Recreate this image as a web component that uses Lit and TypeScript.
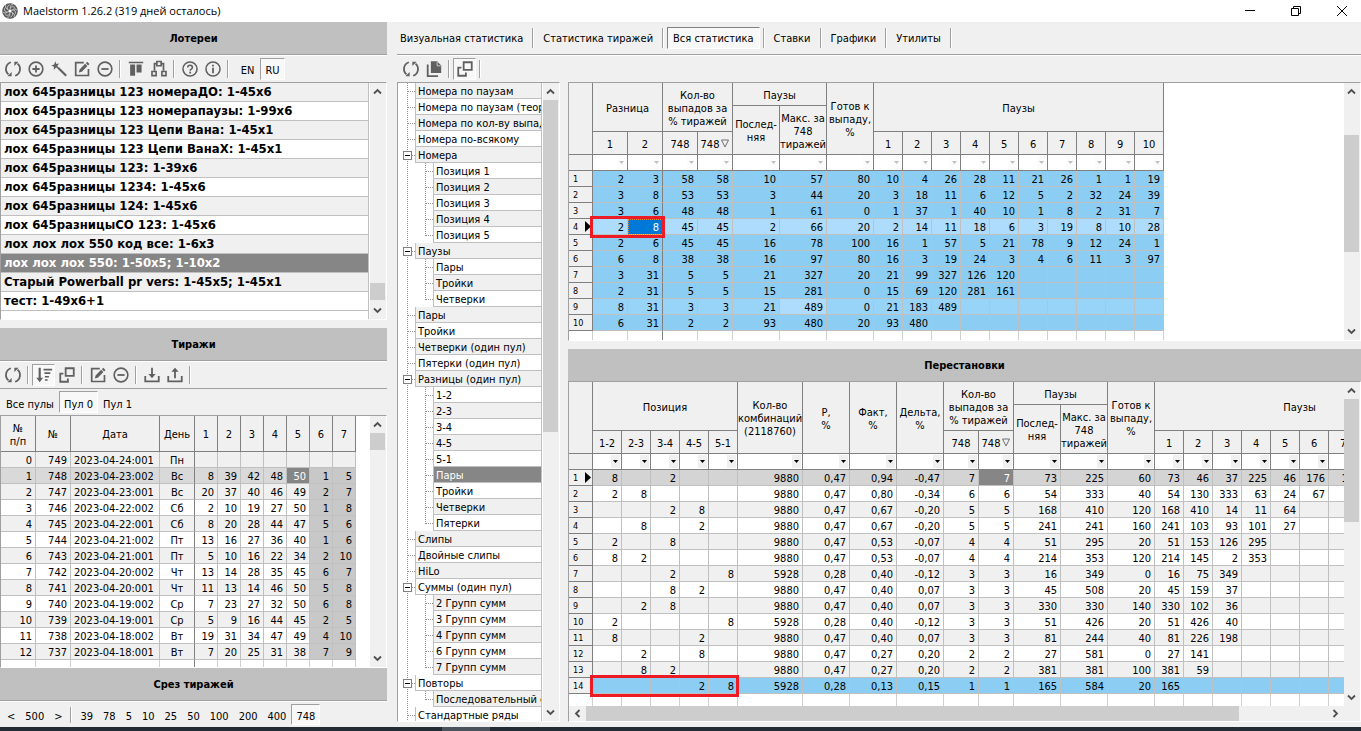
import { LitElement, html, css, svg, nothing } from "lit";
import { customElement, property } from "lit/decorators.js";
import { classMap } from "lit/directives/class-map.js";

/* ---------- icons ---------- */
const icons: Record<string, any> = {
  refresh: svg`<path d="M7.600 2.500A7.900 7.900 0 0 0 5 16M12.400 17.500A7.900 7.900 0 0 0 15 4" fill="none" stroke="currentColor" stroke-width="2"/><path d="M3.800 18h4.700v-4.800zM16.200 2h-4.700v4.800z"/>`,
  plus: svg`<circle cx="10" cy="10" r="7.6" fill="none" stroke="currentColor" stroke-width="1.8"/><path d="M9 6h2v3h3v2h-3v3H9v-3H6V9h3z"/>`,
  minus: svg`<circle cx="10" cy="10" r="7.6" fill="none" stroke="currentColor" stroke-width="1.8"/><path d="M6 9h8v2H6z"/>`,
  wand: svg`<path d="M9 8.5l9 9" stroke="currentColor" stroke-width="2.4"/><path d="M6 1.5l1 3 3.2-.6-2 2.6 1.6 3-3.2-1.1L4.200 11l.2-3.400L1.400 6l3.200-1z"/>`,
  edit: svg`<path d="M12 3H3v14.200h14.200V10" fill="none" stroke="currentColor" stroke-width="1.900"/><path d="M6.500 13.800l.8-3.300 6.200-6.200 2.500 2.500-6.200 6.200zM14.300 3.500l1.500-1.500 2.500 2.500-1.500 1.500z"/>`,
  columns: svg`<path d="M2 2h16v1.600H2zM3.500 5H9v12.500H3.500zM10.600 5h5.600v9h-5.600z"/>`,
  nodes: svg`<path d="M8 4H5v8M12 4h3v8" fill="none" stroke="currentColor" stroke-width="1.900"/><path d="M7.600 1.600h4.800v4.800H7.600zM2.200 12.800h4.600v4.600H2.200zM13.200 12.800h4.600v4.600h-4.600z" fill="none" stroke="currentColor" stroke-width="1.800"/>`,
  help: svg`<circle cx="10" cy="10" r="7.800" fill="none" stroke="currentColor" stroke-width="1.700"/><path d="M7.500 8.200c0-3.400 5.200-3.200 5.200 0 0 1.900-2.500 1.900-2.500 3.700" fill="none" stroke="currentColor" stroke-width="1.700"/><path d="M9.200 13h2v2h-2z"/>`,
  info: svg`<circle cx="10" cy="10" r="7.800" fill="none" stroke="currentColor" stroke-width="1.700"/><path d="M9 5.200h2v2H9zM9 8.600h2v6H9z"/>`,
  sort: svg`<path d="M4 2h2.400v11H9l-3.800 5L1.400 13H4zM9.500 3H19v2H9.500zM10.500 7H17v2h-6.500zM11 11h4.500v1.800H11zM11 14.600h3v1.800h-3z"/>`,
  layers: svg`<path d="M8.500 2.500h9v8.500h-9z" fill="none" stroke="currentColor" stroke-width="2"/><path d="M6 8.500H2.500v9H11V14" fill="none" stroke="currentColor" stroke-width="2"/>`,
  download: svg`<path d="M2.500 11v6h15v-6" fill="none" stroke="currentColor" stroke-width="2"/><path d="M9 2h2v7h3l-4 4.500L6 9h3z"/>`,
  upload: svg`<path d="M2.500 11v6h15v-6" fill="none" stroke="currentColor" stroke-width="2"/><path d="M9 13.500h2v-7h3L10 2 6 6.500h3z"/>`,
  copy: svg`<path d="M6.500 1.500h7l4.500 4.500v8.500H6.500z"/><path d="M3 5v13h11.500" fill="none" stroke="currentColor" stroke-width="2"/><path d="M13.500 2v4.500h4" fill="none" stroke="#f0f0f0" stroke-width=".8"/>`,
};
const icon = (name: string) =>
  html`<svg class="icon" viewBox="0 0 20 20" fill="currentColor" aria-hidden="true">${icons[name]}</svg>`;

/* ---------- scroll bar ---------- */
@customElement("scroll-strip")
class ScrollStrip extends LitElement {
  @property({ type: Boolean, reflect: true }) horizontal = false;
  @property({ type: Number }) before = 0;
  @property({ type: Number }) thumb = 0;
  @property({ type: Number }) after = 0;

  static styles = css`
    :host { display: flex; flex-direction: column; flex: none; width: 16px; background: #f0f0f0; border-right: 1px solid #f0f0f0; }
    :host([horizontal]) { flex-direction: row; width: auto; height: 15px; border-right: 16px solid #f0f0f0; }
    button { flex: none; height: 17px; width: 100%; padding: 0; border: 0; background: none; display: flex; align-items: center; justify-content: center; color: #505050; }
    :host([horizontal]) button { width: 17px; height: 100%; }
    svg { width: 9px; height: 9px; display: block; }
    .thumb { background: #cdcdcd; }
  `;
  arrow(d: string, label: string) {
    return html`<button aria-label=${label}><svg viewBox="0 0 9 9"><path d=${d} fill="none" stroke="currentColor" stroke-width="1.800"/></svg></button>`;
  }
  render() {
    const h = this.horizontal;
    return html`
      ${this.arrow(h ? "M6.500 1L3 4.500 6.500 8" : "M1 6.500L4.500 3 8 6.500", h ? "Влево" : "Вверх")}
      <div style="flex:${this.before} 1 0"></div>
      <div class="thumb" style="flex:${this.thumb} 1 0"></div>
      <div style="flex:${this.after} 1 0"></div>
      ${this.arrow(h ? "M2.500 1L6 4.500 2.500 8" : "M1 2.500L4.500 6 8 2.500", h ? "Вправо" : "Вниз")}`;
  }
}

/* ---------- data ---------- */
const lotteries = [
  "лох 645разницы 123 номераДО: 1-45x6",
  "лох 645разницы 123 номерапаузы: 1-99x6",
  "лох 645разницы 123 Цепи Вана: 1-45x1",
  "лох 645разницы 123 Цепи ВанаХ: 1-45x1",
  "лох 645разницы 123: 1-39x6",
  "лох 645разницы 1234: 1-45x6",
  "лох 645разницы 124: 1-45x6",
  "лох 645разницыСО 123: 1-45x6",
  "лох лох лох 550 код все: 1-6x3",
  "лох лох лох 550: 1-50x5; 1-10x2",
  "Старый Powerball pr vers: 1-45x5; 1-45x1",
  "тест: 1-49x6+1",
];
const draws = `0 749 2023-04-24:001 Пн
1 748 2023-04-23:002 Вс 8 39 42 48 50 1 5
2 747 2023-04-23:001 Вс 20 37 40 46 49 2 7
3 746 2023-04-22:002 Сб 2 10 19 27 50 1 8
4 745 2023-04-22:001 Сб 8 20 28 44 47 5 6
5 744 2023-04-21:002 Пт 13 16 27 36 40 1 6
6 743 2023-04-21:001 Пт 5 10 16 22 34 2 10
7 742 2023-04-20:002 Чт 13 14 28 35 45 6 7
8 741 2023-04-20:001 Чт 11 13 14 46 50 5 8
9 740 2023-04-19:002 Ср 7 23 27 32 50 6 8
10 739 2023-04-19:001 Ср 5 9 16 44 45 2 5
11 738 2023-04-18:002 Вт 19 31 34 47 49 4 10
12 737 2023-04-18:001 Вт 7 20 25 31 38 7 9`.split("\n").map((r) => r.split(" "));

/* "+" opens a branch, "-" is a child, "_" is the last child */
const tree = [
  "Номера по паузам", "Номера по паузам (теория)", "Номера по кол-ву выпадов", "Номера по-всякому",
  "+Номера", "-Позиция 1", "-Позиция 2", "-Позиция 3", "-Позиция 4", "_Позиция 5",
  "+Паузы", "-Пары", "-Тройки", "_Четверки",
  "Пары", "Тройки", "Четверки (один пул)", "Пятерки (один пул)",
  "+Разницы (один пул)", "-1-2", "-2-3", "-3-4", "-4-5", "-5-1", "-Пары", "-Тройки", "-Четверки", "_Пятерки",
  "Слипы", "Двойные слипы", "HiLo",
  "+Суммы (один пул)", "-2 Групп сумм", "-3 Групп сумм", "-4 Групп сумм", "-6 Групп сумм", "_7 Групп сумм",
  "+Повторы", "_Последовательный список", "Стандартные ряды",
];
const selectedNode = 24;

const diffs = `2 3 58 58 10 57 80 10 4 26 28 11 21 26 1 1 19
3 8 53 53 3 44 20 3 18 11 6 12 5 2 32 24 39
3 6 48 48 1 61 0 1 37 1 40 10 1 8 2 31 7
2 8 45 45 2 66 20 2 14 11 18 6 3 19 8 10 28
2 6 45 45 16 78 100 16 1 57 5 21 78 9 12 24 1
6 8 38 38 16 97 80 16 3 19 24 3 4 6 11 3 97
3 31 5 5 21 327 20 21 99 327 126 120
2 31 5 5 15 281 0 15 69 120 281 161
8 31 3 3 21 489 0 21 183 489
6 31 2 2 93 480 20 93 480`.split("\n").map((r) => r.split(" "));

const perms = `8 . 2 . . 9880 0,47 0,94 -0,47 7 7 73 225 60 73 46 37 225 46 176 12
2 8 . . . 9880 0,47 0,80 -0,34 6 6 54 333 40 54 130 333 63 24 67
. . 2 8 . 9880 0,47 0,67 -0,20 5 5 168 410 120 168 410 14 11 64
. 8 . 2 . 9880 0,47 0,67 -0,20 5 5 241 241 160 241 103 93 101 27
2 . 8 . . 9880 0,47 0,53 -0,07 4 4 51 295 20 51 153 126 295
8 2 . . . 9880 0,47 0,53 -0,07 4 4 214 353 120 214 145 2 353
. . 2 . 8 5928 0,28 0,40 -0,12 3 3 16 349 0 16 75 349
. . 8 2 . 9880 0,47 0,40 0,07 3 3 45 508 20 45 159 37
. 2 8 . . 9880 0,47 0,40 0,07 3 3 330 330 140 330 102 36
2 . . . 8 5928 0,28 0,40 -0,12 3 3 51 426 20 51 426 40
8 . . 2 . 9880 0,47 0,40 0,07 3 3 81 244 40 81 226 198
. 2 . 8 . 9880 0,47 0,27 0,20 2 2 27 581 0 27 141
. 8 2 . . 9880 0,47 0,27 0,20 2 2 381 381 100 381 59
. . . 2 8 5928 0,28 0,13 0,15 1 1 165 584 20 165`
  .split("\n").map((r) => r.split(" ").map((v) => (v === "." ? "" : v)));

const rep = (w: number, n: number) => Array(n).fill(w);
const drawCols = [35, 35, 89, 35, ...rep(23, 7)];
const diffCols = [24, 35, 35, 35, 35, 47, 47, 47, ...rep(29, 10)];
const permCols = [24, ...rep(29, 5), 65, 47, 47, 47, 35, 35, 47, 47, 47, ...rep(29, 10)];
const sum = (a: number[]) => a.reduce((x, y) => x + y, 0);
const pad = (r: string[], n: number) => [...r, ...Array(Math.max(0, n - r.length)).fill("")];
const cols = (a: number[]) => html`<colgroup>${a.map((w) => html`<col style="width:${w}px" />`)}</colgroup>`;
const ten = [1, 2, 3, 4, 5, 6, 7, 8, 9, 10];

@customElement("app-root")
class AppRoot extends LitElement {
  static styles = css`
    :host { display: block; font: 11px/13px "DejaVu Sans Condensed", "Noto Sans", sans-serif; color: #000; }
    * { box-sizing: border-box; }
    button { font: inherit; color: inherit; background: none; border: 1px solid transparent; padding: 0; margin: 0; white-space: nowrap; }
    .window { height: 100vh; display: grid; grid-template-rows: 22px minmax(0, 1fr) 4px; background: #f0f0f0; overflow: hidden; }

    .title { display: flex; align-items: center; background: #fff; padding-left: 2px; gap: 5px; font: 11px/18px "Open Sans", sans-serif; }
    .logo { width: 16px; height: 16px; flex: none; }
    .title h1 { font: inherit; margin: 0; flex: 1; white-space: nowrap; }
    .winbtns { display: flex; gap: 8px; }
    .winbtns button { width: 38px; height: 20px; display: flex; align-items: center; justify-content: center; }
    .winbtns svg { width: 12px; height: 12px; }

    .body { display: grid; grid-template-columns: 387px minmax(0, 1fr); gap: 10px; min-height: 0; }
    .side { display: grid; grid-template-rows: 33px 27px minmax(0, 238fr) 8px 33px 27px 27px minmax(0, 253fr) 33px 26px; min-height: 0; }
    .bar { margin: 0; padding-top: 2px; display: flex; align-items: center; justify-content: center; background: #c0c0c0; font: bold 11px/14px "DejaVu Sans Condensed", sans-serif; border-bottom: 1px solid #a0a0a0; }
    .bar.flat { border-bottom: 0; }
    .tools { display: flex; align-items: center; padding-left: 1px; border-top: 1px solid #fff; }
    .tool { width: 23px; height: 22px; display: flex; align-items: center; justify-content: center; color: #606060; flex: none; }
    .icon { width: 18px; height: 18px; display: block; flex: none; }
    .sep { width: 2px; height: 18px; margin: 0 3px; background: linear-gradient(to right, #a0a0a0 50%, #fff 50%); flex: none; }
    .pressed { background: #f8f8f8; border-color: #a0a0a0 #fff #fff #a0a0a0; }
    .lang { width: 25px; height: 22px; padding-top: 2px; }
    .lang.first { margin-left: 3px; }

    .box { display: flex; min-height: 0; min-width: 0; background: #fff; border: 1px solid #fff; border-top-color: #a0a0a0; border-left-color: #a0a0a0; overflow: hidden; }
    .view { flex: 1; min-width: 0; overflow: hidden; }
    .list { list-style: none; margin: 0 1px 0 0; padding: 0; font: bold 13px/18px "DejaVu Sans Condensed", sans-serif; border-right: 1px solid #c0c0c0; height: 100%; }
    .list li { height: 19px; padding-left: 3px; border-bottom: 1px solid #c0c0c0; white-space: nowrap; overflow: hidden; }
    .list li:nth-child(odd) { background: #f0f0f0; }
    .list li.sel { background: #868686; color: #fff; }

    .pools { display: flex; align-items: flex-end; border-top: 1px solid #a0a0a0; padding: 0 0 2px 1px; }
    .pools button { height: 22px; padding: 4px 4px 0; }
    .slice { display: flex; align-items: center; padding-left: 2px; border-top: 1px solid #fff; }
    .slice button { height: 21px; padding: 4px 4px 0; }
    .slice .sep { margin: 0 3px; height: 16px; }

    table { border-collapse: separate; border-spacing: 0; table-layout: fixed; }
    th, td { padding: 0; font-weight: normal; white-space: nowrap; border-right: 1px solid #c0c0c0; border-bottom: 1px solid #c0c0c0; }
    th { text-align: center; background: #f0f0f0; border-color: #808080; padding-top: 2px; }
    td { height: 16px; padding: 2px 3px 0 0; text-align: right; line-height: 13px; }
    tbody tr:nth-child(odd) td { background: #f0f0f0; }
    tr.h1, tr.h3 { height: 23px; }
    tr.h2 { height: 26px; }
    tr.tall { height: 36px; }
    .draws td:nth-child(3) { text-align: left; padding: 2px 0 0 3px; }
    .draws td:nth-child(4) { text-align: center; padding: 2px 0 0; border-right-color: #808080; }
    .draws tbody tr.cur td { background: #d9d9d9; }
    .draws tbody tr td.extra { background: #c8c8c8; }
    .perms tbody tr.cur td { background: #d4d4d4; }
    .draws tbody tr.cur td.dark, .perms tbody tr.cur td.dark { background: #868686; color: #fff; }

    tr.filter { height: 16px; }
    tr.filter th { padding: 0; }
    tr.filter td { background: #fff; border-color: #808080; padding: 0 1px 0 0; }
    tr.filter button { display: flex; align-items: center; justify-content: center; width: 9px; height: 13px; border: 0; margin-left: auto; background: #fcfcfc; color: #c0c0c0; }
    .perms tr.filter button { background: #f0f0f0; color: #000; }
    tr.filter svg { width: 5px; height: 3px; }
    .num { text-align: left; padding: 2px 0 0 4px; font-size: 9px; line-height: 13px; }
    .num svg { float: right; width: 6px; height: 11px; margin-right: 1px; }
    .sortmark { width: 8px; height: 9px; margin-left: 2px; }
    .diffs tbody tr td { background: #8ccdf4; }
    .diffs td:nth-child(3) { border-right-color: #808080; }
    .diffs tbody tr.near td { background: #98d4f8; }
    .diffs tbody tr.cur td, .diffs tbody tr.near td.light { background: #addcfc; }
    .diffs tbody tr.cur td.focus { background: #0078d7; color: #fff; outline: 1px dotted #e08a3c; outline-offset: -1px; }
    .perms tbody tr.hit td { background: #8ccdf4; }
    table tbody tr.ghost td, table tbody tr.ghost th { background: #fff; border-right-color: #d0d0d0; border-bottom: 0; padding: 0; }
    .holder { position: relative; }
    .mark { position: absolute; border: 3px solid #ed1c24; left: -3px; top: -3px; height: 22px; pointer-events: none; }

    .main { display: grid; grid-template-rows: 33px 27px minmax(0, 1fr); min-width: 0; min-height: 0; padding-bottom: 5px; }
    .tabs { display: flex; align-items: center; border-bottom: 1px solid #a0a0a0; }
    .tabs button { height: 22px; padding: 0 5px; }
    .tabs .sep { height: 20px; margin: 0 3px; }
    .tabs button:first-child { padding-left: 2px; }
    .tabs .pressed { border-color: #808080 #fff #fff #808080; }
    .main .tools { padding-left: 2px; }
    .work { display: grid; grid-template-columns: 163px minmax(0, 1fr); gap: 8px; min-height: 0; }
    .grids { display: grid; grid-template-rows: minmax(0, 259fr) 8px 32px minmax(0, 341fr); min-height: 0; }
    .stack { display: flex; flex-direction: column; flex: 1; min-width: 0; min-height: 0; }
    .row { display: flex; flex: 1; min-height: 0; }

    .tree { margin: 0; padding: 0; list-style: none; }
    .node { display: flex; height: 16px; }
    .node .label { flex: 1; min-width: 0; overflow: hidden; white-space: nowrap; padding: 2px 0 0 2px; line-height: 13px; border: solid #c0c0c0; border-width: 0 1px 1px 1px; margin-right: 1px; }
    .node:nth-child(odd) .label { background: #f0f0f0; }
    .node.sel .label { background: #868686; color: #fff; }
    .gut { flex: none; width: 17px; display: block; }
    .gut.in { width: 18px; }
    .gut path { stroke: #909090; stroke-dasharray: 1 1; fill: none; }
    .gut rect { fill: #fff; stroke: #808080; }
    .gut .bar-line { stroke: #000; stroke-dasharray: none; }

    .taskbar { background: #232c35; padding-left: 442px; }
    .taskbar div { width: 48px; height: 100%; background: #4a525b; }
  `;

  tool(name: string, label: string, pressed = false) {
    return html`<button class=${classMap({ tool: true, pressed })} aria-label=${label}>${icon(name)}</button>`;
  }
  sep = html`<span class="sep"></span>`;

  filter(n: number) {
    return html`<tr class="filter"><th></th>${Array.from({ length: n }, () => html`<td><button aria-label="Фильтр"><svg viewBox="0 0 5 3"><path d="M0 0h5L2.500 3z" fill="currentColor"/></svg></button></td>`)}</tr>`;
  }
  sorted = html`748<svg class="sortmark" viewBox="0 0 8 9"><path d="M.5 1h7L4 8z" fill="none" stroke="#707070"/></svg>`;
  pointer = html`<svg viewBox="0 0 6 11"><path d="M0 0l6 5.500L0 11z"/></svg>`;
  ghost(n: number) {
    return html`<tr class="ghost"><th></th>${Array.from({ length: n }, () => html`<td></td>`)}</tr>`;
  }

  treeNode(raw: string, i: number) {
    const kind = "+-_".includes(raw[0]) ? raw[0] : "";
    const text = kind ? raw.slice(1) : raw;
    const child = kind === "-" || kind === "_";
    return html`<li class=${classMap({ node: true, sel: i === selectedNode })}>
      <svg class="gut" viewBox="0 0 17 16">
        <path d="M9.500 0v16" />
        ${child ? nothing : svg`<path d="M10 8.500h7" />`}
        ${kind === "+" ? svg`<rect x="5.500" y="4.500" width="8" height="8" /><path class="bar-line" d="M7 8.500h5" />` : nothing}
      </svg>
      ${child ? html`<svg class="gut in" viewBox="0 0 18 16"><path d=${kind === "_" ? "M10.500 0v9" : "M10.500 0v16"} /><path d="M11 8.500h7" /></svg>` : nothing}
      <span class="label">${text}</span>
    </li>`;
  }

  drawsTable() {
    return html`<table class="draws" style="width:${sum(drawCols)}px">${cols(drawCols)}
      <thead><tr class="tall"><th>№<br />п/п</th><th>№</th><th>Дата</th><th>День</th>${ten.slice(0, 7).map((n) => html`<th>${n}</th>`)}</tr></thead>
      <tbody>
        ${draws.map((r, i) => html`<tr class=${classMap({ cur: i === 1 })}>${pad(r, 11).map((v, c) => html`<td class=${classMap({ extra: i > 0 && c > 8, dark: i === 1 && c === 8 })}>${v}</td>`)}</tr>`)}
        <tr class="ghost">${drawCols.map(() => html`<td></td>`)}</tr>
      </tbody></table>`;
  }

  diffsTable() {
    return html`<table class="diffs" style="width:${sum(diffCols)}px">${cols(diffCols)}
      <thead>
        <tr class="h1"><th rowspan="3"></th><th colspan="2" rowspan="2">Разница</th><th colspan="2" rowspan="2">Кол-во<br />выпадов за<br />% тиражей</th><th colspan="2">Паузы</th><th rowspan="3">Готов к<br />выпаду,<br />%</th><th colspan="10" rowspan="2">Паузы</th></tr>
        <tr class="h2"><th rowspan="2">Послед-<br />няя</th><th rowspan="2">Макс. за<br />748<br />тиражей</th></tr>
        <tr class="h3"><th>1</th><th>2</th><th>748</th><th>${this.sorted}</th>${ten.map((n) => html`<th>${n}</th>`)}</tr>
        ${this.filter(17)}
      </thead>
      <tbody>
        ${diffs.map((r, i) => html`<tr class=${classMap({ cur: i === 3, near: i === 8 })}><th class="num">${i === 3 ? this.pointer : nothing}${i + 1}</th>${pad(r, 17).map((v, c) => html`<td class=${classMap({ focus: i === 3 && c === 1, light: i === 8 && c === 5, holder: i === 3 && c === 0 })}>${v}${i === 3 && c === 0 ? html`<span class="mark" style="width:${35 + 35 + 5}px"></span>` : nothing}</td>`)}</tr>`)}
        ${this.ghost(17)}
      </tbody></table>`;
  }

  permsTable() {
    return html`<table class="perms" style="width:${sum(permCols)}px">${cols(permCols)}
      <thead>
        <tr class="h1"><th rowspan="3"></th><th colspan="5" rowspan="2">Позиция</th><th rowspan="3">Кол-во<br />комбинаций<br />(2118760)</th><th rowspan="3">P,<br />%</th><th rowspan="3">Факт,<br />%</th><th rowspan="3">Дельта,<br />%</th><th colspan="2" rowspan="2">Кол-во<br />выпадов за<br />% тиражей</th><th colspan="2">Паузы</th><th rowspan="3">Готов к<br />выпаду,<br />%</th><th colspan="10" rowspan="2">Паузы</th></tr>
        <tr class="h2"><th rowspan="2">Послед-<br />няя</th><th rowspan="2">Макс. за<br />748<br />тиражей</th></tr>
        <tr class="h3">${["1-2", "2-3", "3-4", "4-5", "5-1"].map((n) => html`<th>${n}</th>`)}<th>748</th><th>${this.sorted}</th>${ten.map((n) => html`<th>${n}</th>`)}</tr>
        ${this.filter(24)}
      </thead>
      <tbody>
        ${perms.map((r, i) => html`<tr class=${classMap({ cur: i === 0, hit: i === 13 })}><th class="num">${i === 0 ? this.pointer : nothing}${i + 1}</th>${pad(r, 24).map((v, c) => html`<td class=${classMap({ dark: i === 0 && c === 10, holder: i === 13 && c === 0 })}>${v}${i === 13 && c === 0 ? html`<span class="mark" style="width:${29 * 5 + 4}px"></span>` : nothing}</td>`)}</tr>`)}
        ${this.ghost(24)}
      </tbody></table>`;
  }

  render() {
    const tabs = ["Визуальная статистика", "Статистика тиражей", "Вся статистика", "Ставки", "Графики", "Утилиты"];
    return html`<div class="window">
      <header class="title">
        <svg class="logo" viewBox="0 0 16 16"><circle cx="8" cy="8" r="7.800" fill="#5a5a5a"/>
          ${[0, 60, 120, 180, 240, 300].map((a) => svg`<path transform="rotate(${a} 8 8)" d="M8 6.400C8.500 3.500 11 3 13 4.600M8.300 5.200C8 3 9 1.500 11 1.600" fill="none" stroke="#d8d8d8" stroke-width=".8"/>`)}
          <circle cx="8" cy="8" r="1.600" fill="#fff"/></svg>
        <h1>Maelstorm 1.26.2 (319 дней осталось)</h1>
        <div class="winbtns">
          <button aria-label="Свернуть"><svg viewBox="0 0 12 12"><path d="M1 5.500h10" stroke="#000"/></svg></button>
          <button aria-label="Восстановить"><svg viewBox="0 0 12 12"><path d="M1.500 3.500h7v7h-7zM3.500 3.500v-2h7v7h-2" fill="none" stroke="#000"/></svg></button>
          <button aria-label="Закрыть"><svg viewBox="0 0 12 12"><path d="M1 1l10 10M11 1L1 11" stroke="#000"/></svg></button>
        </div>
      </header>
      <div class="body">
        <aside class="side">
          <h2 class="bar">Лотереи</h2>
          <div class="tools">
            ${this.tool("refresh", "Обновить")}${this.tool("plus", "Добавить")}${this.tool("wand", "Мастер")}${this.tool("edit", "Изменить")}${this.tool("minus", "Удалить")}${this.sep}
            ${this.tool("columns", "Столбцы")}${this.tool("nodes", "Схема")}${this.sep}
            ${this.tool("help", "Справка")}${this.tool("info", "О программе")}${this.sep}
            <button class="lang first">EN</button><button class="lang pressed">RU</button>
          </div>
          <div class="box">
            <div class="view"><ul class="list">${lotteries.map((t, i) => html`<li class=${i === 9 ? "sel" : ""}>${t}</li>`)}</ul></div>
            <scroll-strip .before=${183} .thumb=${17} .after=${2}></scroll-strip>
          </div>
          <div></div>
          <h2 class="bar">Тиражи</h2>
          <div class="tools">
            ${this.tool("refresh", "Обновить")}${this.sep}${this.tool("sort", "Сортировка", true)}${this.tool("layers", "Слои")}${this.sep}
            ${this.tool("edit", "Изменить")}${this.tool("minus", "Удалить")}${this.sep}${this.tool("download", "Загрузить")}${this.tool("upload", "Выгрузить")}${this.sep}
          </div>
          <div class="pools"><button>Все пулы</button><button class="pressed">Пул 0</button><button>Пул 1</button></div>
          <div class="box">
            <div class="view">${this.drawsTable()}</div>
            <scroll-strip .before=${0} .thumb=${17} .after=${200}></scroll-strip>
          </div>
          <h2 class="bar">Срез тиражей</h2>
          <div class="slice">
            <button>&lt;</button><button>500</button><button>&gt;</button>${this.sep}
            ${[39, 78, 5, 10, 25, 50, 100, 200, 400].map((n) => html`<button>${n}</button>`)}<button class="pressed">748</button>
          </div>
        </aside>
        <main class="main">
          <nav class="tabs">${tabs.map((t, i) => html`<button class=${i === 2 ? "pressed" : ""}>${t}</button>${this.sep}`)}</nav>
          <div class="tools">${this.tool("refresh", "Обновить")}${this.tool("copy", "Копировать")}${this.sep}${this.tool("layers", "Слои", true)}${this.sep}</div>
          <div class="work">
            <div class="box">
              <div class="view"><ul class="tree">${tree.map((t, i) => this.treeNode(t, i))}</ul></div>
              <scroll-strip .before=${0} .thumb=${332} .after=${272}></scroll-strip>
            </div>
            <div class="grids">
              <div class="box"><div class="view">${this.diffsTable()}</div><scroll-strip .before=${35} .thumb=${117} .after=${71}></scroll-strip></div>
              <div></div>
              <h2 class="bar flat">Перестановки</h2>
              <div class="box"><div class="stack">
                <div class="row"><div class="view">${this.permsTable()}</div><scroll-strip .before=${0} .thumb=${123} .after=${166}></scroll-strip></div>
                <scroll-strip horizontal .before=${0} .thumb=${653} .after=${88}></scroll-strip>
              </div></div>
            </div>
          </div>
        </main>
      </div>
      <div class="taskbar"><div></div></div>
    </div>`;
  }
}
